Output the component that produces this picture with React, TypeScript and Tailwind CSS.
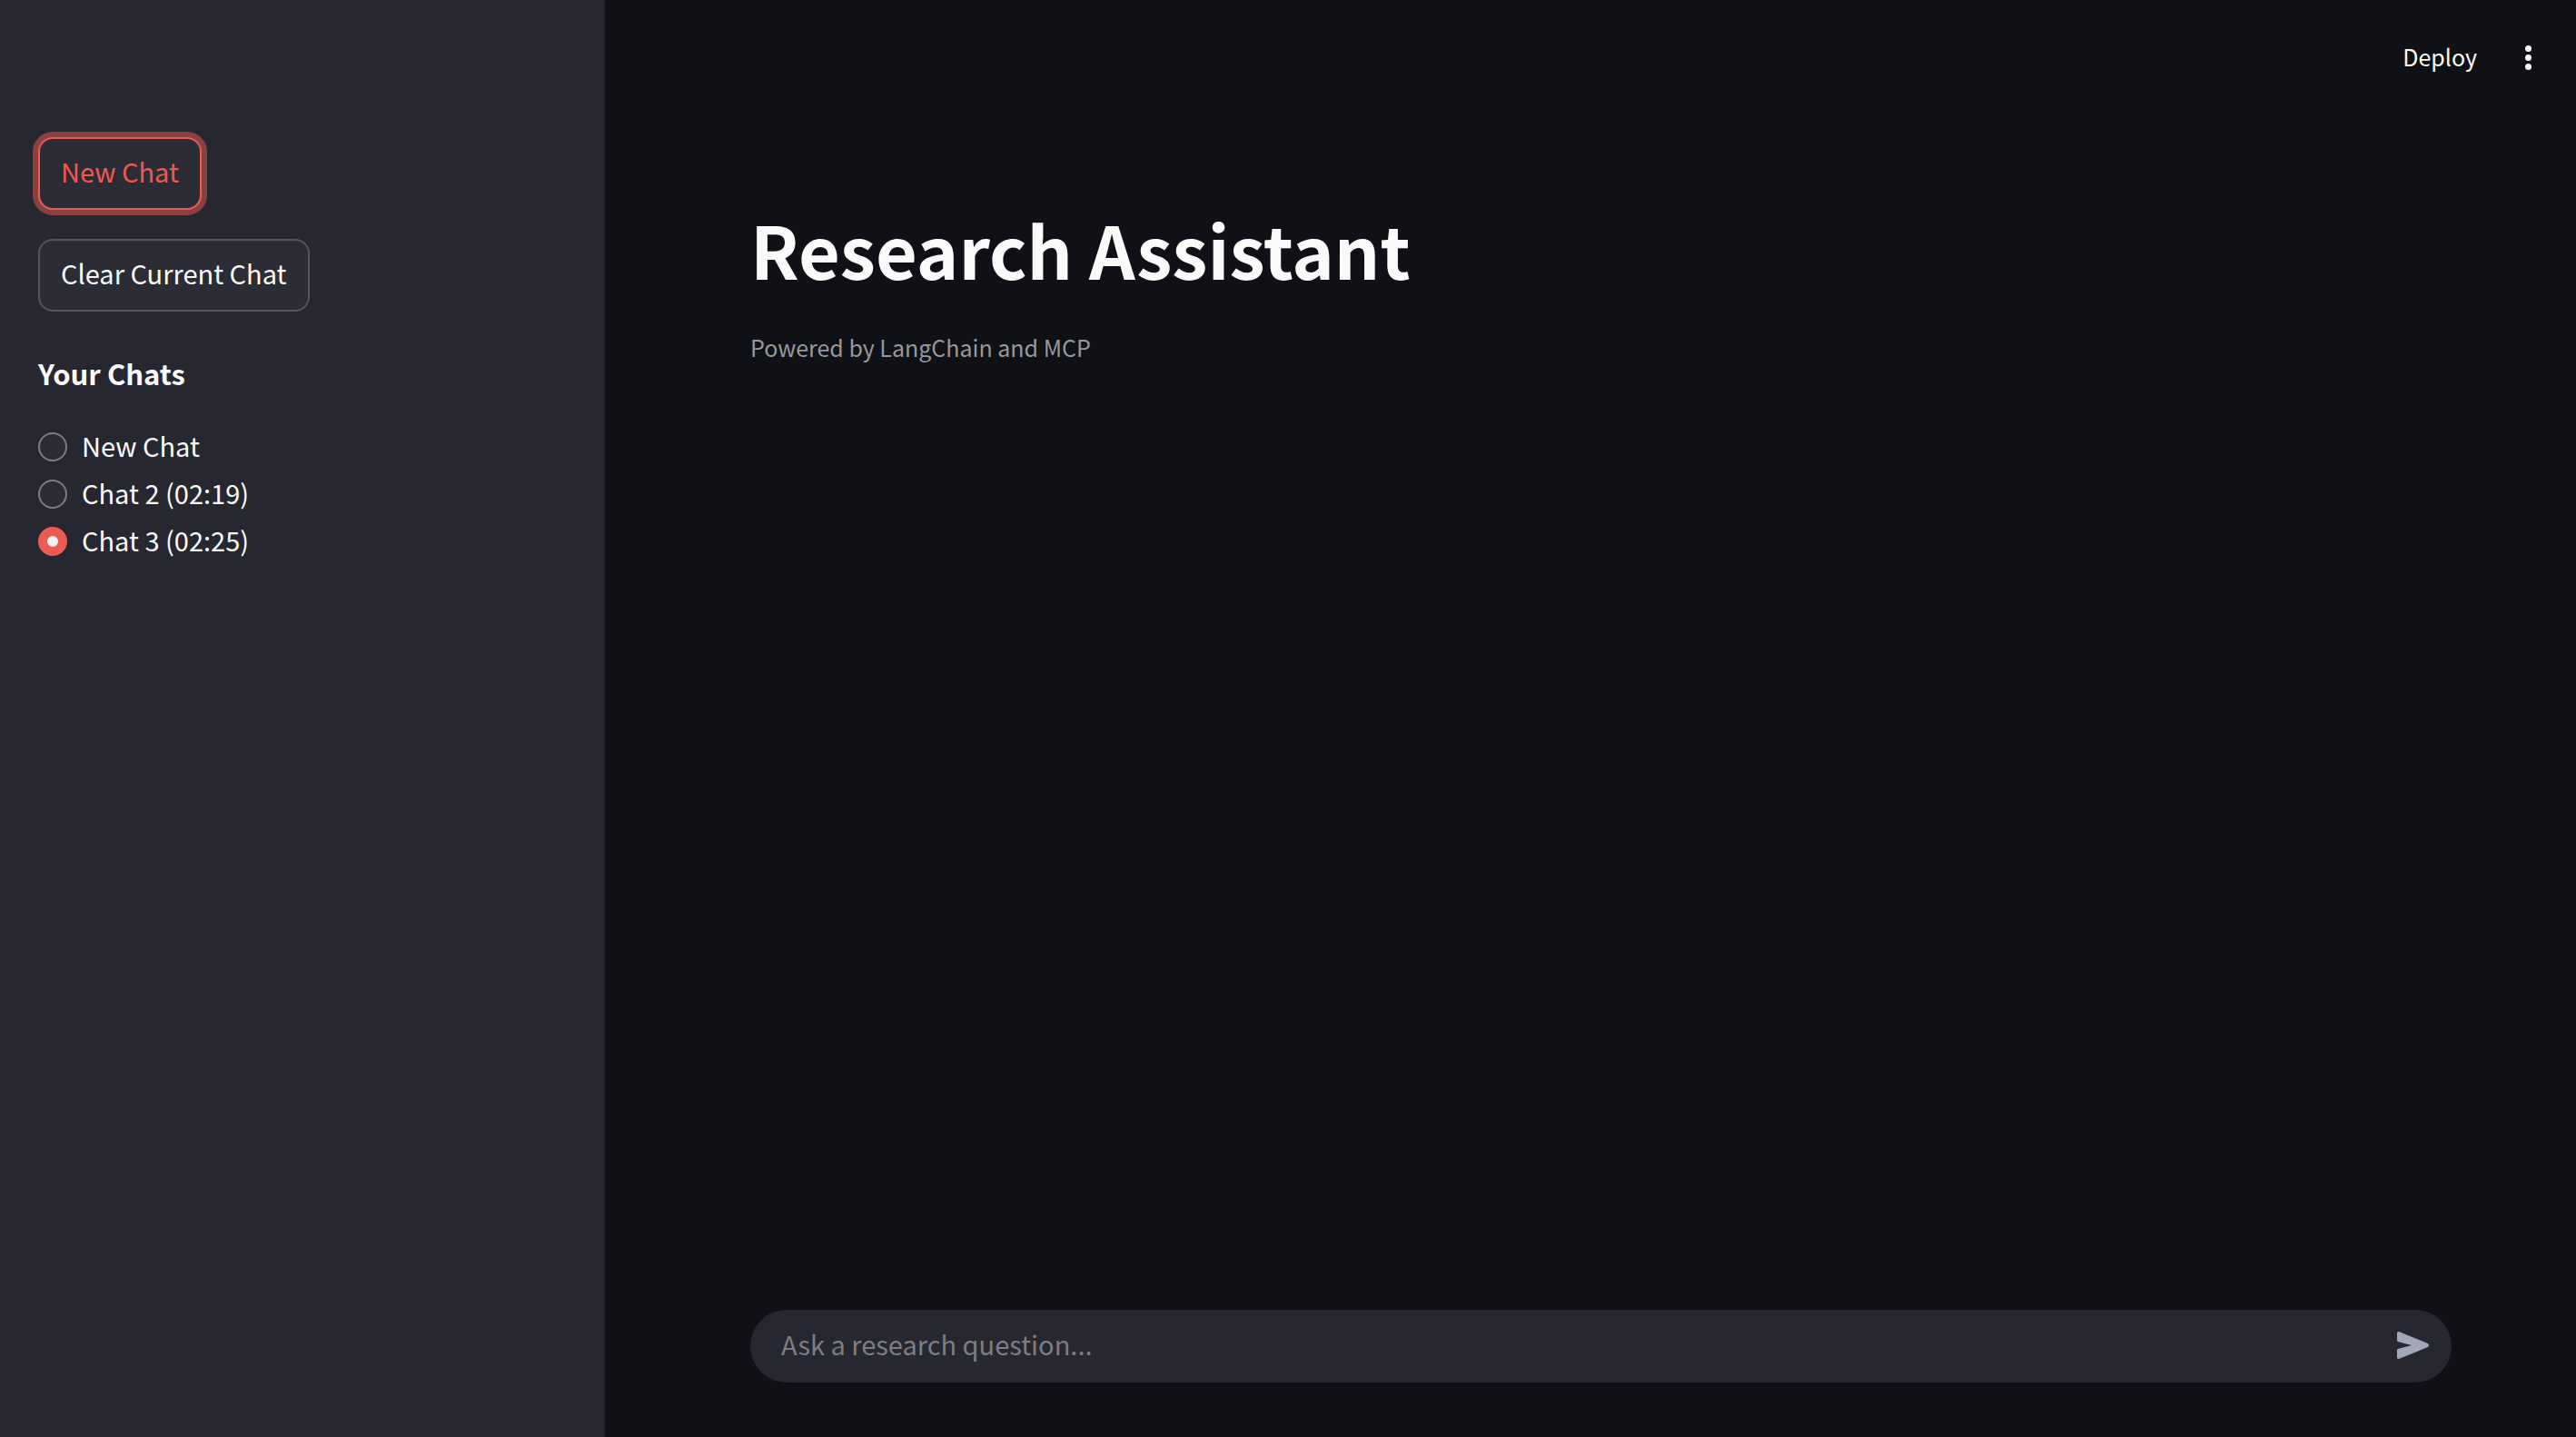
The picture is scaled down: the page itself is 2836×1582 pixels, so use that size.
import { useState } from "react";

const chats = ["New Chat", "Chat 2 (02:19)", "Chat 3 (02:25)"];

function SendIcon() {
  return (
    <svg viewBox="0 0 105 90" className="h-[30px] w-[35px]" fill="currentColor" aria-hidden="true">
      <path d="M0 5Q0 -2 8 1L100 38Q105 41 105 45Q105 49 100 52L8 89Q0 92 0 85V61Q0 57 5 56L48 45L5 34Q0 33 0 29Z" />
    </svg>
  );
}

function Sidebar() {
  const [selected, setSelected] = useState(2);
  return (
    <aside className="flex w-[666px] shrink-0 flex-col items-start bg-[#262730] px-[42px] pt-[151px]">
      <button className="h-20 rounded-2xl border-2 border-[#ed5a52] bg-[#2b2c36] px-[23px] pb-1 text-[29px] text-[#ed5a52] ring-[6px] ring-[#894142]">
        New Chat
      </button>
      <button className="mt-8 h-20 rounded-2xl border-2 border-[#53545c] bg-[#2b2c36] px-[23px] pb-1 text-[29px]">
        Clear Current Chat
      </button>
      <h2 id="chats-heading" className="mt-12 text-[31px] leading-10 font-semibold">
        Your Chats
      </h2>
      <div role="radiogroup" aria-labelledby="chats-heading" className="mt-[35px] flex flex-col">
        {chats.map((chat, i) => (
          <label key={chat} className="flex h-[52px] items-center gap-4 text-[29px] leading-10">
            <input
              type="radio"
              name="chat"
              checked={selected === i}
              onChange={() => setSelected(i)}
              className="size-8 appearance-none rounded-full border-2 border-[#7c7d80] bg-[#2b2c36] checked:border-10 checked:border-[#ed5a52] checked:bg-[#f0f2f6]"
            />
            <span className="pb-1">{chat}</span>
          </label>
        ))}
      </div>
    </aside>
  );
}

export default function App() {
  return (
    <div className="flex min-h-screen bg-[#101116] font-['Noto_Sans_CJK_SC',sans-serif] text-[#fafafa]">
      <Sidebar />
      <div className="flex min-w-0 flex-1 flex-col">
        <header className="flex h-[126px] items-center justify-end gap-[42px] pr-[39px]">
          <button className="pb-0.5 text-[25px] leading-10">Deploy</button>
          <button aria-label="Main menu" className="flex w-7 flex-col items-center gap-[3px]">
            <span className="size-[7px] rounded-full bg-[#fafafa]" />
            <span className="size-[7px] rounded-full bg-[#fafafa]" />
            <span className="size-[7px] rounded-full bg-[#fafafa]" />
          </button>
        </header>
        <main className="flex flex-1 flex-col pr-[137px] pb-[60px] pl-40">
          <h1 className="mt-[94px] text-[79px] leading-[108px] font-bold">Research Assistant</h1>
          <p className="mt-[34px] text-[25px] leading-10 text-[#98989b]">Powered by LangChain and MCP</p>
          <form
            className="mt-auto flex h-20 items-center rounded-full bg-[#262730] pr-[25px] pl-[34px]"
            onSubmit={(e) => e.preventDefault()}
          >
            <input
              type="text"
              aria-label="Ask a research question"
              placeholder="Ask a research question..."
              className="h-full min-w-0 flex-1 bg-transparent pb-1.5 text-[29px] outline-none placeholder:text-[#7d7d83]"
            />
            <button type="submit" aria-label="Send" className="pb-0.5 text-[#a3a8b8]">
              <SendIcon />
            </button>
          </form>
        </main>
      </div>
    </div>
  );
}
